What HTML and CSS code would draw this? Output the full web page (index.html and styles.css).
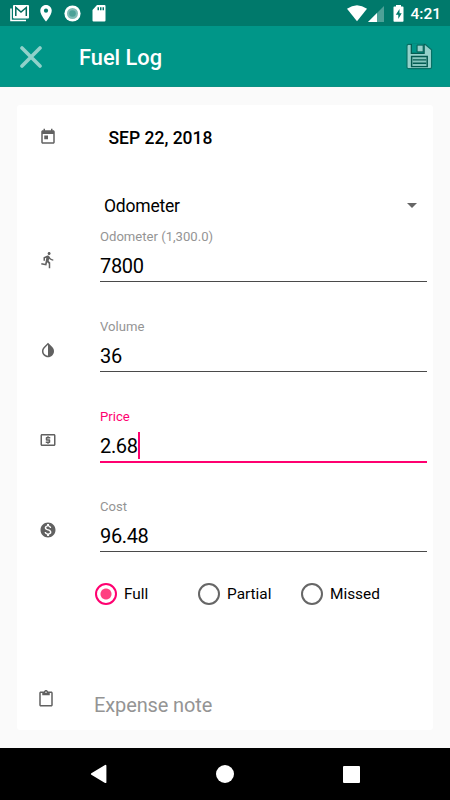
FILE: index.html
```html
<!DOCTYPE html>
<html lang="en">
<head>
<meta charset="utf-8">
<title>Fuel Log</title>
<link rel="stylesheet" href="styles.css">
</head>
<body>
<div class="statusbar">
  <svg class="s-mail" width="20" height="18" viewBox="0 0 20 18"><path d="M1 3.500V15.500h15" fill="none" stroke="#fff" stroke-width="1.600"/><path d="M4 0h14q1 0 1 1v11.500q0 1-1 1H4q-1 0-1-1V1q0-1 1-1z" fill="#fff"/><path d="M5.800 11V2.500L11 7l5.300-4.500V11" fill="none" stroke="#00695c" stroke-width="1.500"/></svg>
  <svg class="s-pin" width="12" height="17" viewBox="0 0 12 17"><path d="M6 0C2.700 0 .3 2.500.3 5.700.3 10 6 16.500 6 16.500S11.700 10 11.700 5.700C11.700 2.500 9.300 0 6 0z" fill="#fff"/><circle cx="6" cy="5.700" r="2.100" fill="#00796b"/></svg>
  <svg class="s-dot" width="17" height="17" viewBox="0 0 17 17"><circle cx="8.500" cy="8.500" r="8.100" fill="#fff"/><circle cx="8.500" cy="8.500" r="5.500" fill="#80bcb5"/><circle cx="8.500" cy="8.500" r="3.300" fill="#4da197"/></svg>
  <svg class="s-sd" width="14" height="17" viewBox="0 0 14 17"><path d="M5 0h7.500Q13.500 0 13.500 1v14.500q0 1-1 1h-11q-1 0-1-1V5z" fill="#fff"/><path d="M5.500 2.300h1.500v3H5.500zM8 2.300h1.500v3H8zM10.500 2.300H12v3h-1.500z" fill="#00796b"/></svg>
  <span class="grow"></span>
  <svg class="s-wifi" width="20" height="17" viewBox="0 0 20 17"><path d="M0 3.800Q10-3.400 20 3.800L10 16.300z" fill="#fff"/></svg>
  <svg class="s-cell" width="16" height="16" viewBox="0 0 16 16"><path d="M16 0v16H0z" fill="#4da197"/><path d="M9 7v9H0z" fill="#fff"/></svg>
  <svg class="s-batt" width="11" height="17" viewBox="0 0 11 17"><path d="M3 0h5v1.500h1.700q.8 0 .8.800V16q0 .8-.8.800H1.300q-.8 0-.8-.8V2.300q0-.8.800-.8H3z" fill="#fff"/><path d="M6.500 4L2.800 9.700h2.500V14l3.400-5.700H6.500z" fill="#00796b"/></svg>
  <span class="clock">4:21</span>
</div>
<header class="appbar">
  <svg class="close" width="22" height="22" viewBox="0 0 22 22"><path d="M2 2l18 18M20 2L2 20" stroke="#91d1ca" stroke-width="3.600" stroke-linecap="round"/></svg>
  <h1 class="title">Fuel Log</h1>
  <span class="grow"></span>
  <svg class="save" width="27" height="27" viewBox="0 0 28 28"><path d="M2.500 1.500h17.500l6.500 5.500v18q0 1.500-1.500 1.500H2.500Q1 26.500 1 25V3q0-1.500 1.500-1.500z" fill="#94d1ca" stroke="#087065" stroke-width="1.200"/><path d="M5.500 .9v9.600h13.300V.9z" fill="#009688"/><path d="M5.500 1v9.800h13.300V1" fill="none" stroke="#045c52" stroke-width="1.300"/><path d="M11.500 2.200h6.300v7h-6.300z" fill="#94d1ca" stroke="#045c52" stroke-width="1"/><path d="M5.800 14h16.200v10.500H5.800z" fill="#86c6be" stroke="#04594f" stroke-width="1.500"/><path d="M7 17.500h14M7 21h14" stroke="#045c52" stroke-width="1.400"/></svg>
</header>
<main class="card">
  <div class="row date-row">
    <svg class="icon" viewBox="0 0 24 24"><path d="M19 3h-1V1h-2v2H8V1H6v2H5c-1.110 0-1.990.9-1.990 2L3 19c0 1.100.89 2 2 2h14c1.100 0 2-.9 2-2V5c0-1.100-.9-2-2-2zm0 16H5V8h14v11zM7 10h5v5H7z"/></svg>
    <span class="date">SEP 22, 2018</span>
  </div>
  <div class="spinner"><span>Odometer</span><i class="caret"></i></div>
  <div class="row">
    <svg class="icon" viewBox="0 0 24 24"><path d="M13.490 5.480c1.100 0 2-.9 2-2s-.9-2-2-2-2 .9-2 2 .9 2 2 2zm-3.600 13.900l1-4.400 2.100 2v6h2v-7.500l-2.100-2 .6-3c1.300 1.500 3.300 2.500 5.500 2.500v-2c-1.900 0-3.500-1-4.300-2.400l-1-1.600c-.4-.6-1-1-1.700-1-.3 0-.5.1-.8.1l-5.200 2.200v4.700h2v-3.400l1.800-.7-1.600 8.100-4.900-1-.4 2 7 1.400z"/></svg>
    <div class="field"><label>Odometer (1,300.0)</label><div class="value">7800</div></div>
  </div>
  <div class="row">
    <svg class="icon" viewBox="0 0 24 24"><path d="M17.660 7.930L12 2.270 6.340 7.930c-3.120 3.120-3.120 8.190 0 11.310C7.900 20.800 9.950 21.580 12 21.580s4.100-.78 5.660-2.340c3.120-3.120 3.120-8.190 0-11.310zM12 19.590c-1.600 0-3.110-.62-4.240-1.760C6.620 16.690 6 15.190 6 13.590s.62-3.110 1.760-4.240L12 5.100v14.490z"/></svg>
    <div class="field"><label>Volume</label><div class="value">36</div></div>
  </div>
  <div class="row">
    <svg class="icon" viewBox="0 0 24 24"><path d="M11 17h2v-1h1c.55 0 1-.45 1-1v-3c0-.55-.45-1-1-1h-3v-1h4V8h-2V7h-2v1h-1c-.55 0-1 .45-1 1v3c0 .55.450 1 1 1h3v1H9v2h2v1zm9-13H4c-1.110 0-1.990.89-1.990 2L2 18c0 1.110.89 2 2 2h16c1.110 0 2-.89 2-2V6c0-1.110-.89-2-2-2zm0 14H4V6h16v12z"/></svg>
    <div class="field focused"><label>Price</label><div class="value">2.68<i class="cursor"></i></div></div>
  </div>
  <div class="row">
    <svg class="icon" viewBox="0 0 24 24"><path d="M12 2C6.480 2 2 6.480 2 12s4.480 10 10 10 10-4.480 10-10S17.520 2 12 2zm1.410 16.090V20h-2.670v-1.930c-1.710-.36-3.160-1.460-3.270-3.400h1.960c.1 1.050.82 1.870 2.650 1.870 1.960 0 2.400-.98 2.400-1.590 0-.83-.44-1.610-2.670-2.140-2.480-.6-4.180-1.620-4.180-3.670 0-1.720 1.390-2.840 3.110-3.210V4h2.670v1.950c1.860.45 2.790 1.860 2.850 3.390H14.300c-.05-1.110-.64-1.870-2.220-1.870-1.500 0-2.400.68-2.400 1.640 0 .84.650 1.390 2.670 1.910s4.180 1.390 4.180 3.910c-.01 1.830-1.380 2.830-3.120 3.160z"/></svg>
    <div class="field"><label>Cost</label><div class="value">96.48</div></div>
  </div>
  <div class="radios">
    <span class="radio on"><i></i>Full</span>
    <span class="radio"><i></i>Partial</span>
    <span class="radio"><i></i>Missed</span>
  </div>
  <div class="note">
    <svg class="icon" viewBox="0 0 24 24"><path d="M19 2h-4.180C14.400.84 13.300 0 12 0c-1.300 0-2.400.84-2.820 2H5c-1.100 0-2 .9-2 2v16c0 1.100.9 2 2 2h14c1.100 0 2-.9 2-2V4c0-1.100-.9-2-2-2zm-7 0c.55 0 1 .45 1 1s-.45 1-1 1-1-.45-1-1 .45-1 1-1zm7 18H5V4h2v3h10V4h2v16z"/></svg>
    <span class="hint">Expense note</span>
  </div>
</main>
<nav class="navbar">
  <svg width="18" height="20" viewBox="0 0 18 20"><path d="M15.500 1.800v16.400L1.800 10z" fill="#fff" stroke="#fff" stroke-width="1.800" stroke-linejoin="round"/></svg>
  <i class="home"></i>
  <i class="recent"></i>
</nav>
</body>
</html>
```

FILE: styles.css
```css
* { box-sizing: border-box; }
body {
  margin: 0;
  width: 450px;
  height: 800px;
  display: flex;
  flex-direction: column;
  background: #fafafa;
  color: #000;
  font-family: Roboto, sans-serif;
  overflow: hidden;
}
svg { display: block; flex: none; }
.grow { flex: 1; }

.statusbar {
  height: 26px;
  background: #00796b;
  display: flex;
  align-items: flex-start;
  padding: 5px 8.5px 0 10px;
  color: #fff;
}
.s-pin { margin-left: 10px; }
.s-dot { margin-left: 12px; }
.s-sd { margin-left: 11px; }
.s-cell { margin: 1px 0 0 1px; }
.s-batt { margin-left: 9px; }
.clock {
  width: 31px;
  margin-left: 7px;
  font-size: 15.5px;
  font-weight: 500;
  line-height: 18px;
  white-space: nowrap;
}

.appbar {
  height: 61px;
  background: #009688;
  display: flex;
  align-items: center;
  padding: 0 17px 0 20px;
  border-bottom: 1px solid #0c9184;
}
.close { margin-top: 1px; }
.save { margin-top: 1px; }
.title {
  margin: 2px 0 0 37px;
  color: #fff;
  font-size: 21.8px;
  font-weight: 500;
}

.card {
  width: 416px;
  height: 625px;
  margin: 18px 0 0 17px;
  background: #fff;
  border-radius: 3px;
}
.icon { width: 18px; height: 18px; fill: #616161; }
.row { height: 90px; display: flex; padding-left: 22px; }
.row .icon { margin-top: 29px; }
.date-row { height: 64px; align-items: center; }
.date-row .icon { margin-top: 0; }
.date {
  margin: 1px 0 0 51.5px;
  font-size: 17.5px;
  font-weight: 500;
}
.spinner {
  height: 32px;
  margin: 21px 16px 0 87px;
  display: flex;
  align-items: center;
  justify-content: space-between;
  font-size: 17.5px;
  letter-spacing: -0.2px;
}
.caret {
  margin-bottom: 1px;
  border: 5.5px solid transparent;
  border-top-color: #666;
  border-bottom: 0;
}
.field { width: 327px; margin-left: 43px; padding-top: 7px; }
label {
  display: block;
  height: 16px;
  line-height: 16px;
  font-size: 13.1px;
  color: #949494;
}
.value {
  display: flex;
  align-items: center;
  height: 37px;
  padding-top: 5px;
  line-height: 32px;
  font-size: 20px;
  letter-spacing: -0.35px;
  border-bottom: 1px solid #4a4a4a;
}
.focused label { color: #ff0070; }
.focused .value { height: 38px; border-bottom: 2px solid #ff0070; }
.cursor { width: 2px; height: 27px; background: #ff0070; }

.radios {
  display: grid;
  grid-template-columns: 103px 103px 103px;
  padding-left: 78px;
  height: 24px;
}
.radio { display: flex; align-items: center; font-size: 15.4px; }
.radio i {
  width: 22px;
  height: 22px;
  margin-right: 7px;
  border: 2px solid #666;
  border-radius: 50%;
}
.on i {
  border-color: #ff0070;
  background: radial-gradient(circle, #ff4081 5px, #fff 6px);
}
.note { display: flex; margin-top: 84px; padding-left: 20px; }
.hint {
  margin-left: 39px;
  line-height: 30px;
  font-size: 20px;
  letter-spacing: -0.12px;
  color: #949494;
}

.navbar {
  height: 52px;
  margin-top: auto;
  background: #000;
  display: flex;
  align-items: center;
  padding-left: 90px;
}
.home {
  width: 18px;
  height: 18px;
  margin-left: 108px;
  border-radius: 50%;
  background: #fff;
}
.recent {
  width: 17px;
  height: 17px;
  margin-left: 109px;
  border-radius: 1px;
  background: #fff;
}
```
